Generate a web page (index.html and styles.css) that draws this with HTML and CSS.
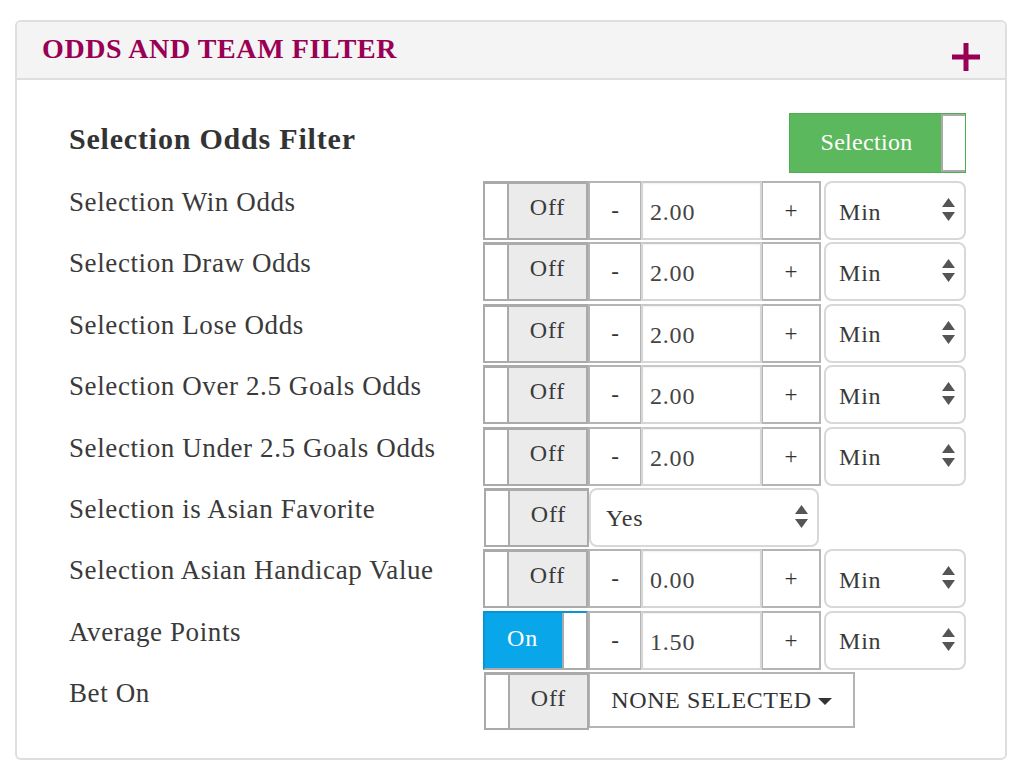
FILE: index.html
```html
<!DOCTYPE html>
<html>
<head>
<meta charset="utf-8">
<link rel="stylesheet" href="styles.css">
</head>
<body>
<div class="panel">
  <div class="panel-head">
    <h2 class="title">ODDS AND TEAM FILTER</h2>
    <span class="plus-icon"><svg width="28" height="28" viewBox="0 0 28 28"><rect x="0" y="11.5" width="28" height="5" fill="#990055"/><rect x="11.5" y="0" width="5" height="28" fill="#990055"/></svg></span>
  </div>
  <div class="panel-body">
    <div class="head-row">
      <div class="heading">Selection Odds Filter</div>
      <div class="sel-toggle"><span class="sel-label">Selection</span><span class="sel-handle"></span></div>
    </div>

    <div class="row">
      <div class="label">Selection Win Odds</div>
      <div class="controls">
        <div class="switch"><span class="handle"></span><span class="state">Off</span></div>
        <div class="btn minus">-</div><div class="num">2.00</div><div class="btn plus">+</div>
        <div class="select"><span>Min</span><svg class="arrows" width="13" height="23" viewBox="0 0 13 23"><polygon points="6.5,0 13,9 0,9" fill="#555"/><polygon points="0,14 13,14 6.5,23" fill="#555"/></svg></div>
      </div>
    </div>

    <div class="row">
      <div class="label">Selection Draw Odds</div>
      <div class="controls">
        <div class="switch"><span class="handle"></span><span class="state">Off</span></div>
        <div class="btn minus">-</div><div class="num">2.00</div><div class="btn plus">+</div>
        <div class="select"><span>Min</span><svg class="arrows" width="13" height="23" viewBox="0 0 13 23"><polygon points="6.5,0 13,9 0,9" fill="#555"/><polygon points="0,14 13,14 6.5,23" fill="#555"/></svg></div>
      </div>
    </div>

    <div class="row">
      <div class="label">Selection Lose Odds</div>
      <div class="controls">
        <div class="switch"><span class="handle"></span><span class="state">Off</span></div>
        <div class="btn minus">-</div><div class="num">2.00</div><div class="btn plus">+</div>
        <div class="select"><span>Min</span><svg class="arrows" width="13" height="23" viewBox="0 0 13 23"><polygon points="6.5,0 13,9 0,9" fill="#555"/><polygon points="0,14 13,14 6.5,23" fill="#555"/></svg></div>
      </div>
    </div>

    <div class="row">
      <div class="label">Selection Over 2.5 Goals Odds</div>
      <div class="controls">
        <div class="switch"><span class="handle"></span><span class="state">Off</span></div>
        <div class="btn minus">-</div><div class="num">2.00</div><div class="btn plus">+</div>
        <div class="select"><span>Min</span><svg class="arrows" width="13" height="23" viewBox="0 0 13 23"><polygon points="6.5,0 13,9 0,9" fill="#555"/><polygon points="0,14 13,14 6.5,23" fill="#555"/></svg></div>
      </div>
    </div>

    <div class="row">
      <div class="label">Selection Under 2.5 Goals Odds</div>
      <div class="controls">
        <div class="switch"><span class="handle"></span><span class="state">Off</span></div>
        <div class="btn minus">-</div><div class="num">2.00</div><div class="btn plus">+</div>
        <div class="select"><span>Min</span><svg class="arrows" width="13" height="23" viewBox="0 0 13 23"><polygon points="6.5,0 13,9 0,9" fill="#555"/><polygon points="0,14 13,14 6.5,23" fill="#555"/></svg></div>
      </div>
    </div>

    <div class="row">
      <div class="label">Selection is Asian Favorite</div>
      <div class="controls">
        <div class="switch"><span class="handle"></span><span class="state">Off</span></div>
        <div class="select wide"><span>Yes</span><svg class="arrows" width="13" height="23" viewBox="0 0 13 23"><polygon points="6.5,0 13,9 0,9" fill="#555"/><polygon points="0,14 13,14 6.5,23" fill="#555"/></svg></div>
      </div>
    </div>

    <div class="row">
      <div class="label">Selection Asian Handicap Value</div>
      <div class="controls">
        <div class="switch"><span class="handle"></span><span class="state">Off</span></div>
        <div class="btn minus">-</div><div class="num">0.00</div><div class="btn plus">+</div>
        <div class="select"><span>Min</span><svg class="arrows" width="13" height="23" viewBox="0 0 13 23"><polygon points="6.5,0 13,9 0,9" fill="#555"/><polygon points="0,14 13,14 6.5,23" fill="#555"/></svg></div>
      </div>
    </div>

    <div class="row">
      <div class="label">Average Points</div>
      <div class="controls">
        <div class="switch on"><span class="state">On</span><span class="handle"></span></div>
        <div class="btn minus">-</div><div class="num">1.50</div><div class="btn plus">+</div>
        <div class="select"><span>Min</span><svg class="arrows" width="13" height="23" viewBox="0 0 13 23"><polygon points="6.5,0 13,9 0,9" fill="#555"/><polygon points="0,14 13,14 6.5,23" fill="#555"/></svg></div>
      </div>
    </div>

    <div class="row last">
      <div class="label">Bet On</div>
      <div class="controls">
        <div class="switch"><span class="handle"></span><span class="state">Off</span></div>
        <div class="dropdown">NONE SELECTED <svg class="caret" width="14" height="8" viewBox="0 0 14 8"><polygon points="0,0 14,0 7,7" fill="#333"/></svg></div>
      </div>
    </div>
  </div>
</div>
</body>
</html>
```

FILE: styles.css
```css
* { box-sizing: border-box; }
html, body { margin: 0; padding: 0; background: #fff; }
body {
  font-family: "Liberation Serif", "Times New Roman", serif;
  color: #3a3a3a;
  padding: 20px 17px 0 15px;
}
.panel {
  border: 2px solid #dedede;
  border-radius: 6px;
  background: #fff;
  width: 992px;
}
.panel-head {
  background: #f4f4f4;
  border-bottom: 2px solid #dedede;
  border-radius: 5px 5px 0 0;
  height: 58px;
  display: flex;
  align-items: flex-start;
  justify-content: space-between;
  padding: 0 25px 0 25px;
}
.title {
  margin: 0;
  padding-top: 12px;
  font-size: 28px;
  line-height: 30px;
  font-weight: bold;
  color: #990055;
  letter-spacing: 0.6px;
}
.plus-icon { padding-top: 21px; display: block; line-height: 0; }
.panel-body {
  padding: 33px 39px 28px 52px;
}
.head-row {
  display: flex;
  justify-content: space-between;
  align-items: flex-start;
  height: 60px;
  margin-bottom: 8px;
}
.heading {
  font-size: 30px;
  font-weight: bold;
  line-height: 32px;
  padding-top: 10px;
  letter-spacing: 0.8px;
  color: #333;
}
.sel-toggle {
  display: flex;
  width: 177px;
  height: 60px;
  background: #5cb85c;
  border: 1px solid #4cae4c;
}
.sel-label {
  flex: 1;
  color: #fff;
  font-size: 24px;
  letter-spacing: 0.3px;
  line-height: 56px;
  text-align: center;
  padding-left: 2px;
}
.sel-handle {
  width: 24px;
  background: #fff;
  border: 2px solid #aaa;
  border-right: 0;
}
.row {
  display: flex;
  height: 61.4px;
}
.label {
  width: 415px;
  font-size: 27px;
  letter-spacing: 0.6px;
  line-height: 30px;
  padding-top: 6px;
  color: #3a3a3a;
}
.controls {
  display: flex;
  align-items: flex-start;
  height: 59px;
  letter-spacing: 0.8px;
}
.switch {
  display: flex;
  width: 105px;
  height: 59px;
  border: 2px solid #aaa;
  border-top-width: 3px;
  background: #ebebeb;
}
.switch .handle {
  width: 24px;
  background: #fff;
  border-right: 2px solid #aaa;
}
.switch .state {
  flex: 1;
  text-align: center;
  font-size: 24px;
  line-height: 46px;
  color: #3a3a3a;
}
.switch.on {
  background: #0aa6ea;
  border-color: #0a95d2 #aaa #aaa #0a95d2;
  border-top-width: 2px;
}
.switch.on .state { color: #fff; line-height: 50px; padding-right: 2px; }
.switch.on .handle { border-right: 0; border-left: 2px solid #aaa; }
.btn {
  height: 59px;
  background: #fff;
  border: 2px solid #b4b4b4;
  font-size: 23px;
  line-height: 55px;
  text-align: center;
  color: #333;
  letter-spacing: 0;
}
.minus { width: 53px; border-right-width: 1px; }
.plus { width: 59px; border-left-width: 1px; }
.num {
  width: 121px;
  height: 59px;
  border: 2px solid #d6d6d6;
  border-top-color: #c8c8c8;
  box-shadow: inset 0 1px 2px rgba(0,0,0,0.06);
  font-size: 24px;
  line-height: 58px;
  padding-left: 7px;
  color: #444;
  background: #fff;
}
.select {
  width: 142px;
  height: 59px;
  margin-left: 3px;
  border: 2px solid #d8d8d8;
  border-radius: 8px;
  display: flex;
  align-items: center;
  justify-content: space-between;
  padding: 0 9px 0 13px;
  font-size: 24px;
  color: #3a3a3a;
  background: #fff;
}
.select span { padding-top: 3px; }
.select.wide { width: 230px; margin-left: 0; padding-left: 15px; }
.arrows { display: block; margin-top: -2px; }
.row.last { height: 58px; }
.row.last .controls { height: 58px; }
.row.last .switch { height: 58px; }
.dropdown {
  width: 266px;
  height: 56px;
  border: 2px solid #b4b4b4;
  border-left-width: 1px;
  background: #fff;
  display: flex;
  align-items: center;
  justify-content: center;
  gap: 6px;
  font-size: 24px;
  color: #333;
  padding-top: 1px;
  letter-spacing: 0.6px;
}
.caret { display: block; margin-top: 2px; }
```
